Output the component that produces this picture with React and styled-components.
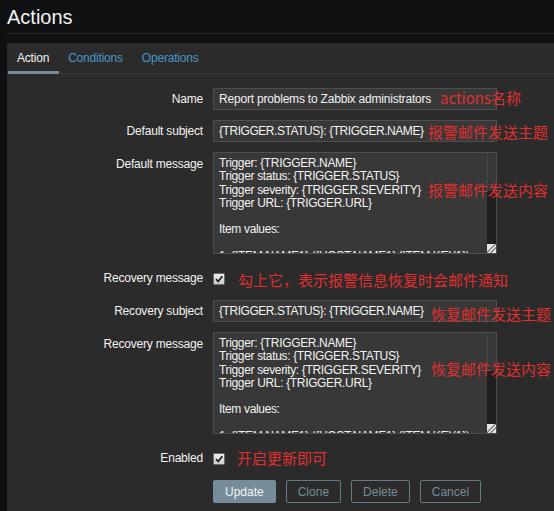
import React from "react";
import styled, { createGlobalStyle } from "styled-components";

const GlobalStyle = createGlobalStyle`
  html, body { margin: 0; padding: 0; }
  body {
    background: #0e1012;
    color: #f2f2f2;
    font-family: "Liberation Sans", Arial, sans-serif;
    font-size: 12px;
    letter-spacing: -0.2px;
    overflow: hidden;
  }
`;

const Page = styled.div`
  min-height: 100vh;
  display: flex;
  flex-direction: column;
`;

const Header = styled.header`
  margin-left: 7px;
  height: 28px;
  padding-top: 5px;
  border-bottom: 1px solid #2b2b2b;
`;

const Title = styled.h1`
  margin: 0;
  font-size: 20px;
  line-height: 24px;
  font-weight: normal;
  letter-spacing: 0;
  color: #f2f2f2;
`;

const Panel = styled.section`
  flex: 1;
  margin: 9px 0 0 7px;
  background: #2b2b2b;
`;

const TabBar = styled.nav`
  display: flex;
  height: 30px;
  padding-left: 1px;
  border-bottom: 1px solid #383838;
`;

const Tab = styled.span`
  position: relative;
  display: flex;
  align-items: center;
  padding: 0 10px 0 9px;
  line-height: 14px;
  color: ${(p) => (p.$active ? "#f2f2f2" : "#4796c4")};
  &::after {
    content: "";
    display: ${(p) => (p.$active ? "block" : "none")};
    position: absolute;
    left: 0;
    right: 0;
    bottom: -1px;
    height: 3px;
    background: #768d99;
  }
`;

const Form = styled.div`
  display: flex;
  flex-direction: column;
  gap: 10px;
  padding-top: 14px;
  padding-bottom: 10px;
`;

const Row = styled.div`
  display: grid;
  grid-template-columns: 196px 1fr;
  column-gap: 10px;
  align-items: ${(p) => (p.$top ? "start" : "center")};
  min-height: ${(p) => p.$h || 0}px;
`;

const Label = styled.label`
  text-align: right;
  line-height: 14px;
  color: #f2f2f2;
  padding-top: ${(p) => p.$pt || 0}px;
`;

const Field = styled.div`
  position: relative;
  display: flex;
  align-items: flex-start;
`;

const TextInput = styled.input`
  box-sizing: border-box;
  width: 284px;
  height: 22px;
  margin: 0;
  padding: 0 5px;
  background: #383838;
  border: 1px solid #4f4f4f;
  color: #f2f2f2;
  font-family: "Liberation Sans", Arial, sans-serif;
  font-size: 12px;
  letter-spacing: ${(p) => (p.$tight ? "-0.45px" : "-0.2px")};
  outline: none;
`;

const TextBox = styled.div`
  box-sizing: border-box;
  display: flex;
  width: 284px;
  height: 102px;
  background: #383838;
  border: 1px solid #4f4f4f;
`;

const TextArea = styled.textarea`
  box-sizing: border-box;
  flex: 1;
  min-width: 0;
  height: 100%;
  margin: 0;
  padding: 4px 5px;
  background: transparent;
  border: none;
  color: #f2f2f2;
  font-family: "Liberation Sans", Arial, sans-serif;
  font-size: 12px;
  letter-spacing: -0.34px;
  line-height: 13.3px;
  resize: none;
  overflow: hidden;
  outline: none;
`;

const ScrollTrack = styled.div`
  display: flex;
  flex-direction: column;
  width: 9px;
  background: #1f1f1f;
`;

const Thumb = styled.div`
  box-sizing: border-box;
  height: 38px;
  background: #383838;
  border-left: 1px solid #474747;
`;

const Grip = styled.div`
  margin-top: auto;
  width: 9px;
  height: 9px;
  background: linear-gradient(135deg, #e4e4e4 0 44%, #888 44% 54%, #e4e4e4 54% 66%, #888 66% 76%, #e4e4e4 76%);
`;

const CheckBox = styled.span`
  box-sizing: border-box;
  display: inline-flex;
  align-items: center;
  justify-content: center;
  width: 12px;
  height: 12px;
  margin-top: 9px;
  background: linear-gradient(#ececec, #cfcfcf);
  border: 1px solid #6a6a6a;
  border-radius: 1px;
`;

const Note = styled.span`
  font-family: "Noto Sans CJK SC", "Liberation Sans", sans-serif;
  font-size: 15px;
  line-height: 15px;
  letter-spacing: 0;
  color: #e02f2f;
  white-space: nowrap;
  ${(p) =>
    p.$over
      ? `position: absolute; left: ${p.$left}px; top: ${p.$top}px;`
      : `margin-left: ${p.$left}px; margin-top: ${p.$top}px;`}
`;

const Buttons = styled.div`
  display: flex;
  gap: 10px;
`;

const Button = styled.button`
  box-sizing: border-box;
  height: 23px;
  padding: 0 11px;
  border-radius: 2px;
  font-family: "Liberation Sans", Arial, sans-serif;
  font-size: 12px;
  cursor: pointer;
  background: ${(p) => (p.$primary ? "#768d99" : "transparent")};
  border: 1px solid ${(p) => (p.$primary ? "#768d99" : "#667a85")};
  color: ${(p) => (p.$primary ? "#f2f2f2" : "#768d99")};
`;

const message = `Trigger: {TRIGGER.NAME}
Trigger status: {TRIGGER.STATUS}
Trigger severity: {TRIGGER.SEVERITY}
Trigger URL: {TRIGGER.URL}

Item values:

1. {ITEM.NAME1} ({HOST.NAME1}:{ITEM.KEY1}): {ITEM.VALUE1}
2. {ITEM.NAME2} ({HOST.NAME2}:{ITEM.KEY2}): {ITEM.VALUE2}
3. {ITEM.NAME3} ({HOST.NAME3}:{ITEM.KEY3}): {ITEM.VALUE3}

Original event ID: {EVENT.ID}`;

const Check = () => (
  <CheckBox>
    <svg width="10" height="10" viewBox="0 0 10 10">
      <polyline points="2,5.2 4.2,7.5 8.3,2.3" fill="none" stroke="#1e1e1e" strokeWidth="1.8" />
    </svg>
  </CheckBox>
);

const MessageBox = () => (
  <TextBox>
    <TextArea defaultValue={message} />
    <ScrollTrack>
      <Thumb />
      <Grip />
    </ScrollTrack>
  </TextBox>
);

export default function App() {
  return (
    <Page>
      <GlobalStyle />
      <Header>
        <Title>Actions</Title>
      </Header>
      <Panel>
        <TabBar>
          <Tab $active>Action</Tab>
          <Tab>Conditions</Tab>
          <Tab>Operations</Tab>
        </TabBar>
        <Form>
          <Row $h={22}>
            <Label>Name</Label>
            <Field>
              <TextInput defaultValue="Report problems to Zabbix administrators" />
              <Note $over $left={227} $top={2}>actions名称</Note>
            </Field>
          </Row>
          <Row $h={22}>
            <Label>Default subject</Label>
            <Field>
              <TextInput $tight defaultValue="{TRIGGER.STATUS}: {TRIGGER.NAME}" />
              <Note $over $left={215} $top={4}>报警邮件发送主题</Note>
            </Field>
          </Row>
          <Row $top $h={102}>
            <Label $pt={5}>Default message</Label>
            <Field>
              <MessageBox />
              <Note $over $left={215} $top={30}>报警邮件发送内容</Note>
            </Field>
          </Row>
          <Row $top $h={26}>
            <Label $pt={7}>Recovery message</Label>
            <Field>
              <Check />
              <Note $left={13} $top={8}>勾上它，表示报警信息恢复时会邮件通知</Note>
            </Field>
          </Row>
          <Row $h={22}>
            <Label>Recovery subject</Label>
            <Field>
              <TextInput $tight defaultValue="{TRIGGER.STATUS}: {TRIGGER.NAME}" />
              <Note $over $left={218} $top={6}>恢复邮件发送主题</Note>
            </Field>
          </Row>
          <Row $top $h={102}>
            <Label $pt={5}>Recovery message</Label>
            <Field>
              <MessageBox />
              <Note $over $left={218} $top={29}>恢复邮件发送内容</Note>
            </Field>
          </Row>
          <Row $top $h={26}>
            <Label $pt={7}>Enabled</Label>
            <Field>
              <Check />
              <Note $left={12} $top={6}>开启更新即可</Note>
            </Field>
          </Row>
          <Row>
            <span />
            <Buttons>
              <Button $primary>Update</Button>
              <Button>Clone</Button>
              <Button>Delete</Button>
              <Button>Cancel</Button>
            </Buttons>
          </Row>
        </Form>
      </Panel>
    </Page>
  );
}
